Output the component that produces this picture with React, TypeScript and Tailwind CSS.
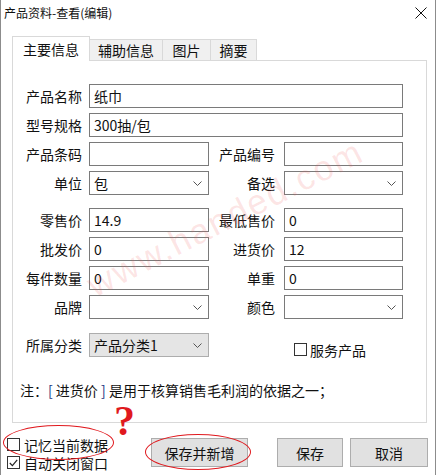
import React from 'react';

const font = { fontFamily: '"Noto Sans CJK SC", "Noto Sans", sans-serif' };

const Chevron = () => (
  <svg width="9" height="5" viewBox="0 0 9 5" className="shrink-0">
    <path d="M0.5 0.5 L4.5 4.5 L8.5 0.5" fill="none" stroke="#555" strokeWidth="1" />
  </svg>
);

const Box = ({ value, select, gray, className }: { value?: string; select?: boolean; gray?: boolean; className: string }) => (
  <div
    className={
      'h-[24px] flex items-center justify-between pl-[4px] pr-[6px] text-[14px] leading-none border ' +
      (gray ? 'bg-[#e5e5e5] border-[#adadad] ' : 'bg-white border-[#7a7a7a] ') +
      className
    }
  >
    <span className="text-[#111]">{value}</span>
    {select && <Chevron />}
  </div>
);

const LeftLabel = ({ text }: { text: string }) => (
  <div className="w-[69px] text-right text-[14px] leading-none text-[#111] mr-[7px]">{text}</div>
);
const RightLabel = ({ text }: { text: string }) => (
  <div className="w-[66px] text-right text-[14px] leading-none text-[#111] mr-[9px]">{text}</div>
);

const Check = ({ checked }: { checked?: boolean }) => (
  <div className="w-[13px] h-[13px] border border-[#333] bg-white flex items-center justify-center shrink-0">
    {checked && (
      <svg width="9" height="8" viewBox="0 0 9 8">
        <path d="M0.8 4 L3.4 6.6 L8.2 0.9" fill="none" stroke="#222" strokeWidth="1.2" />
      </svg>
    )}
  </div>
);

const Row = ({ children, className }: { children: React.ReactNode; className?: string }) => (
  <div className={'flex items-center h-[24px] ' + (className ?? '')}>{children}</div>
);

export default function App() {
  return (
    <div className="w-[440px] h-[475px] bg-white relative overflow-hidden" style={font}>
      <div className="w-[436px] h-[475px] border-l border-r border-[#8c8c8c] bg-white flex flex-col">
        {/* title bar */}
        <div className="h-[26px] flex items-center justify-between pl-[3px] pr-[5px]">
          <span className="text-[12px] leading-none text-[#111]">产品资料-查看(编辑)</span>
          <svg width="12" height="12" viewBox="0 0 12 12" className="mr-[3px]">
            <path d="M0.5 0.5 L11.5 11.5 M11.5 0.5 L0.5 11.5" stroke="#111" strokeWidth="1" />
          </svg>
        </div>

        {/* tabs */}
        <div className="mt-[10px] ml-[11px] flex items-end h-[24px]">
          <div className="w-[78px] h-[25px] border border-b-0 border-[#d9d9d9] bg-white flex items-center justify-center text-[14px] leading-none text-[#111] relative z-10 -mb-[1px]">
            主要信息
          </div>
          <div className="w-[73px] h-[21px] border border-l-0 border-b-0 border-[#d9d9d9] bg-[#f0f0f0] flex items-center justify-center text-[14px] leading-none text-[#111]">
            辅助信息
          </div>
          <div className="w-[48px] h-[21px] border border-l-0 border-b-0 border-[#d9d9d9] bg-[#f0f0f0] flex items-center justify-center text-[14px] leading-none text-[#111]">
            图片
          </div>
          <div className="w-[46px] h-[21px] border border-l-0 border-b-0 border-[#d9d9d9] bg-[#f0f0f0] flex items-center justify-center text-[14px] leading-none text-[#111]">
            摘要
          </div>
        </div>

        {/* panel */}
        <div className="ml-[11px] w-[415px] h-[363px] border border-[#d9d9d9] bg-white pt-[23px] flex flex-col">
          <Row>
            <LeftLabel text="产品名称" />
            <Box value="纸巾" className="w-[314px]" />
          </Row>
          <Row className="mt-[5px]">
            <LeftLabel text="型号规格" />
            <Box value="300抽/包" className="w-[314px]" />
          </Row>
          <Row className="mt-[5px]">
            <LeftLabel text="产品条码" />
            <Box className="w-[120px]" />
            <RightLabel text="产品编号" />
            <Box className="w-[119px]" />
          </Row>
          <Row className="mt-[5px]">
            <LeftLabel text="单位" />
            <Box value="包" select className="w-[120px]" />
            <RightLabel text="备选" />
            <Box select className="w-[119px]" />
          </Row>
          <Row className="mt-[13px]">
            <LeftLabel text="零售价" />
            <Box value="14.9" className="w-[120px]" />
            <RightLabel text="最低售价" />
            <Box value="0" className="w-[119px]" />
          </Row>
          <Row className="mt-[5px]">
            <LeftLabel text="批发价" />
            <Box value="0" className="w-[120px]" />
            <RightLabel text="进货价" />
            <Box value="12" className="w-[119px]" />
          </Row>
          <Row className="mt-[5px]">
            <LeftLabel text="每件数量" />
            <Box value="0" className="w-[120px]" />
            <RightLabel text="单重" />
            <Box value="0" className="w-[119px]" />
          </Row>
          <Row className="mt-[5px]">
            <LeftLabel text="品牌" />
            <Box select className="w-[120px]" />
            <RightLabel text="颜色" />
            <Box select className="w-[119px]" />
          </Row>
          <Row className="mt-[14px]">
            <LeftLabel text="所属分类" />
            <Box value="产品分类1" select gray className="w-[120px]" />
            <div className="ml-[85px] mt-[9px] flex items-center gap-[3px]">
              <Check />
              <span className="text-[14px] leading-none text-[#111]">服务产品</span>
            </div>
          </Row>
          <div className="mt-[23px] pl-[7px] h-[20px] flex items-center text-[14px] leading-none text-[#111] whitespace-pre">
            注：<span className="text-[#1a3380]">[</span> 进货价 <span className="text-[#1a3380]">]</span> 是用于核算销售毛利润的依据之一；
          </div>
        </div>

        {/* bottom */}
        <div className="flex items-start mt-[15px]">
          <div className="w-[150px] pl-[6px] flex flex-col gap-[5px]">
            <div className="flex items-center gap-[4px] h-[13px]">
              <Check />
              <span className="text-[14px] leading-none text-[#111]">记忆当前数据</span>
            </div>
            <div className="flex items-center gap-[4px] h-[13px]">
              <Check checked />
              <span className="text-[14px] leading-none text-[#111]">自动关闭窗口</span>
            </div>
          </div>
          <button className="w-[97px] h-[29px] bg-[#e1e1e1] border border-[#adadad] text-[14px] leading-none text-[#111]">
            保存并新增
          </button>
          <button className="ml-[29px] w-[66px] h-[29px] bg-[#e1e1e1] border border-[#adadad] text-[14px] leading-none text-[#111]">
            保存
          </button>
          <button className="ml-[7px] w-[78px] h-[29px] bg-[#e1e1e1] border border-[#adadad] text-[14px] leading-none text-[#111]">
            取消
          </button>
        </div>
      </div>

      {/* watermark */}
      <div
        className="absolute left-[70px] top-[200px] w-[310px] text-center text-[35px] tracking-[2px] leading-none text-[rgba(240,90,90,0.16)] pointer-events-none -rotate-[27deg]"
        style={{ fontFamily: '"Liberation Sans", sans-serif' }}
      >
        www.handed.com
      </div>

      {/* annotations */}
      <div className="absolute left-[3px] top-[425px] w-[111px] h-[35px] rounded-[50%] border-[1.5px] border-[#e0191e] pointer-events-none" />
      <div className="absolute left-[145px] top-[434px] w-[106px] h-[36px] rounded-[50%] border-[1.5px] border-[#e0191e] pointer-events-none" />
      <div
        className="absolute left-[114px] top-[400px] text-[42px] font-bold leading-none text-[#e0191e]"
        style={{ fontFamily: '"Liberation Serif", serif' }}
      >
        ?
      </div>
    </div>
  );
}
